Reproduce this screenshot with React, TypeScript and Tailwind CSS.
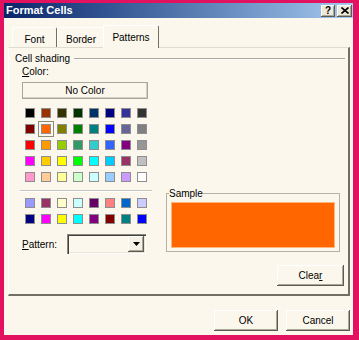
import React from 'react';

const palette = [
  ['#000000', '#993300', '#333300', '#003300', '#003366', '#000080', '#333399', '#333333'],
  ['#800000', '#FF6600', '#808000', '#008000', '#008080', '#0000FF', '#666699', '#808080'],
  ['#FF0000', '#FF9900', '#99CC00', '#339966', '#33CCCC', '#3366FF', '#800080', '#969696'],
  ['#FF00FF', '#FFCC00', '#FFFF00', '#00FF00', '#00FFFF', '#00CCFF', '#993366', '#C0C0C0'],
  ['#FF99CC', '#FFCC99', '#FFFF99', '#CCFFCC', '#CCFFFF', '#99CCFF', '#CC99FF', '#FFFFFF'],
];

const chartColors = [
  ['#9999FF', '#993366', '#FFFFCC', '#CCFFFF', '#660066', '#FF8080', '#0066CC', '#CCCCFF'],
  ['#000080', '#FF00FF', '#FFFF00', '#00FFFF', '#800080', '#800000', '#008080', '#0000FF'],
];

const raised =
  'shadow-[inset_-1px_-1px_0_#5e5c52,inset_1px_1px_0_#ffffff,inset_-2px_-2px_0_#aaa798]';

const Swatch = ({ color, selected }: { color: string; selected?: boolean }) => (
  <div
    className={`w-4 h-4 flex items-center justify-center ${
      selected ? 'shadow-[inset_0_0_0_1px_#8d8a7e]' : ''
    }`}
  >
    <div className="w-[10px] h-[10px] border border-[#8e8e8e]" style={{ backgroundColor: color }} />
  </div>
);

const ColorGrid = ({ rows, selected }: { rows: string[][]; selected?: string }) => (
  <div className="grid grid-cols-8 w-[128px]">
    {rows.flat().map((c, i) => (
      <Swatch key={i} color={c} selected={c === selected && i < 16} />
    ))}
  </div>
);

const Tab = ({ label, width, active }: { label: string; width: number; active?: boolean }) =>
  active ? (
    <div
      className="relative z-10 -mx-[2px] -mb-px h-[23px] bg-[#fbf7ec] border-t border-l border-white border-r border-r-[#716f64] rounded-t-[2px] flex justify-center pt-[5px]"
      style={{ width }}
    >
      {label}
    </div>
  ) : (
    <div
      className="h-[20px] border-t border-l border-white border-r border-r-[#716f64] rounded-t-[2px] flex justify-center pt-[5px]"
      style={{ width }}
    >
      {label}
    </div>
  );

export default function App() {
  return (
    <div className="w-[359px] h-[340px] bg-[#e31260] pt-[3px] pl-[4px] font-['Liberation_Sans',Arial,sans-serif] text-[10px] leading-[13px] text-black">
      <div className="w-[349px] h-[332px] bg-[#fbf7ec] flex flex-col">
        {/* title bar */}
        <div className="h-[15px] bg-linear-to-r from-[#0a246a] to-[#a6caf0] flex items-center justify-between pl-[2px] pr-[1px]">
          <span className="text-white font-bold text-[11px]">Format Cells</span>
          <div className="flex gap-[2px]">
            <div className={`w-[14px] h-[12px] bg-[#ece9d8] ${raised} flex items-center justify-center font-bold text-[10px] leading-none`}>
              ?
            </div>
            <div className={`w-[15px] h-[12px] bg-[#ece9d8] ${raised} flex items-center justify-center`}>
              <svg width="8" height="7" viewBox="0 0 8 7">
                <path d="M0.5 0.5 L7.5 6.5 M7.5 0.5 L0.5 6.5" stroke="#000" strokeWidth="1.6" />
              </svg>
            </div>
          </div>
        </div>

        <div className="pl-[4px] pr-[3px]">
          {/* tabs */}
          <div className="flex items-end h-[22px] mt-[7px] pl-[4px]">
            <Tab label="Font" width={45} />
            <Tab label="Border" width={48} />
            <Tab label="Patterns" width={56} active />
          </div>

          {/* tab panel */}
          <div className="h-[249px] border-t border-t-[#e0dccf] border-l border-l-white border-r-2 border-r-[#716f64] border-b-2 border-b-[#716f64] pt-[4px] pr-[3px] flex flex-col">
            <div className="flex items-center pl-[6px]">
              <span>Cell shading</span>
              <div className="flex-1 ml-[4px] border-t border-t-[#aca899] border-b border-b-white" />
            </div>

            <div className="flex">
              {/* left column */}
              <div className="w-[151px] pl-[13px] flex flex-col">
                <div>
                  <span className="underline">C</span>olor:
                </div>
                <div className="mt-[4px] w-[126px] h-[17px] border border-[#aaa698] shadow-[inset_-1px_-1px_0_#d2cfc3] flex items-center justify-center">
                  No Color
                </div>
                <div className="mt-[6px]">
                  <ColorGrid rows={palette} selected="#FF6600" />
                </div>
                <div className="mt-[5px] -ml-[2px] w-[132px] border-t border-t-[#c9c5b7] border-b border-b-white" />
                <div className="mt-[3px]">
                  <ColorGrid rows={chartColors} />
                </div>
                <div className="mt-[7px] flex items-center">
                  <span className="w-[45px]">
                    <span className="underline">P</span>attern:
                  </span>
                  <div className="w-[79px] h-[20px] shadow-[inset_1px_1px_0_#8a877b,inset_2px_2px_0_#404040,inset_-1px_-1px_0_#ffffff,inset_-2px_-2px_0_#e8e4d8] flex justify-end p-[2px]">
                    <div className={`w-[16px] h-full bg-[#f4f1e6] ${raised} flex items-center justify-center`}>
                      <svg width="7" height="4" viewBox="0 0 7 4">
                        <path d="M0 0 H7 L3.5 4 Z" fill="#000" />
                      </svg>
                    </div>
                  </div>
                </div>
              </div>

              {/* right column */}
              <div className="flex-1 pt-[122px] pl-[6px] flex flex-col">
                <fieldset className="w-[174px] border border-[#b6b3a6] px-[4px] pb-[3px]">
                  <legend className="-ml-[2px]">Sample</legend>
                  <div className="mt-[2px] h-[46px] bg-[#ff6600] border border-[#fdb57a]" />
                </fieldset>
                <div className="self-end mt-[13px] mr-[1px]">
                  <div className={`w-[67px] h-[21px] ${raised} flex items-center justify-center`}>
                    <span>
                      Clea<span className="underline">r</span>
                    </span>
                  </div>
                </div>
              </div>
            </div>
          </div>

          {/* dialog buttons */}
          <div className="mt-[14px] flex justify-end gap-[8px]">
            <div className={`w-[64px] h-[21px] ${raised} flex items-center justify-center`}>OK</div>
            <div className={`w-[64px] h-[21px] ${raised} flex items-center justify-center`}>Cancel</div>
          </div>
        </div>
      </div>
    </div>
  );
}
